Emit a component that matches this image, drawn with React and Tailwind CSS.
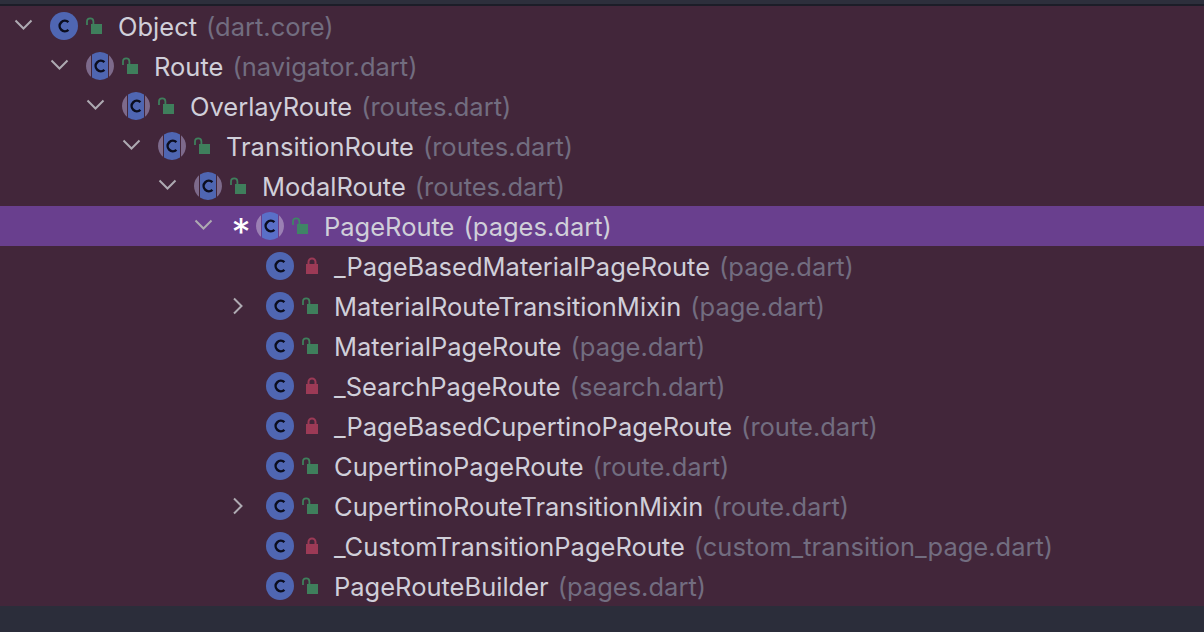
const rows = [
  { pad: "pl-[14px]", open: true, name: "Object", file: "(dart.core)" },
  { pad: "pl-[50px]", open: true, name: "Route", file: "(navigator.dart)", split: true },
  { pad: "pl-[86px]", open: true, name: "OverlayRoute", file: "(routes.dart)", split: true },
  { pad: "pl-[122px]", open: true, name: "TransitionRoute", file: "(routes.dart)", split: true },
  { pad: "pl-[158px]", open: true, name: "ModalRoute", file: "(routes.dart)", split: true },
  { pad: "pl-[194px]", open: true, name: "PageRoute", file: "(pages.dart)", split: true, selected: true },
  { pad: "pl-[230px]", name: "_PageBasedMaterialPageRoute", file: "(page.dart)", locked: true },
  { pad: "pl-[230px]", closed: true, name: "MaterialRouteTransitionMixin", file: "(page.dart)" },
  { pad: "pl-[230px]", name: "MaterialPageRoute", file: "(page.dart)" },
  { pad: "pl-[230px]", name: "_SearchPageRoute", file: "(search.dart)", locked: true },
  { pad: "pl-[230px]", name: "_PageBasedCupertinoPageRoute", file: "(route.dart)", locked: true },
  { pad: "pl-[230px]", name: "CupertinoPageRoute", file: "(route.dart)" },
  { pad: "pl-[230px]", closed: true, name: "CupertinoRouteTransitionMixin", file: "(route.dart)" },
  { pad: "pl-[230px]", name: "_CustomTransitionPageRoute", file: "(custom_transition_page.dart)", locked: true },
  { pad: "pl-[230px]", name: "PageRouteBuilder", file: "(pages.dart)" },
];

function Chevron({ kind }) {
  return (
    <svg width="20" height="20" viewBox="0 0 20 20" fill="none" className="shrink-0" stroke="#aeaab2" strokeWidth="2">
      {kind === "open" ? <path d="M1.5 4.5 L9.5 12.5 L17.5 4.5" /> : <path d="M4 2.5 L11.5 10 L4 17.5" />}
    </svg>
  );
}

function ClassIcon({ split, selected }) {
  const blue = selected ? "#5a6fc8" : "#4f66b2";
  const side = selected ? "#9b80b4" : "#7d6a8b";
  return (
    <svg width="28" height="28" viewBox="0 0 28 28" className="shrink-0">
      {split ? (
        <>
          <path d="M5 3.3 A14 14 0 0 0 5 24.7 Z" fill={side} />
          <path d="M23 3.3 A14 14 0 0 1 23 24.7 Z" fill={side} />
          <path d="M6 2.51 A14 14 0 0 1 22 2.51 L22 25.49 A14 14 0 0 1 6 25.49 Z" fill={blue} />
        </>
      ) : (
        <circle cx="14" cy="14" r="14" fill="#4f66b2" />
      )}
      <path d="M18.4 10.2 A5.2 5.2 0 1 0 18.4 17.8" fill="none" stroke="#0b0d1e" strokeWidth="2.5" />
    </svg>
  );
}

function LockIcon({ locked, selected }) {
  if (locked) {
    return (
      <svg width="16" height="18" viewBox="0 0 16 18" className="shrink-0">
        <path d="M6.5 9 V5 a3.5 3.5 0 0 1 7 0 V9" fill="none" stroke="#9c3a56" strokeWidth="2" />
        <rect x="4" y="7" width="12" height="10" fill="#9c3a56" />
      </svg>
    );
  }
  const c = selected ? "#3f8466" : "#3f7f5c";
  return (
    <svg width="16" height="18" viewBox="0 0 16 18" className="shrink-0">
      <path d="M1 8 V4.5 a3.2 3.2 0 0 1 6.4 0 V7" fill="none" stroke={c} strokeWidth="1.8" />
      <rect x="5" y="7" width="11" height="10" fill={c} />
    </svg>
  );
}

export default function App() {
  return (
    <div className="w-[1204px] h-[632px] overflow-hidden flex flex-col bg-[#2b2d3a] font-['Inter',sans-serif] text-[25.5px]">
      <div className="h-[4px] bg-[#2d2f3c] shrink-0" />
      <div className="h-[2px] bg-[#1c1d28] shrink-0" />
      <div className="h-[600px] shrink-0 bg-[#42263a] flex flex-col">
        {rows.map((r) => (
          <div
            key={r.name}
            className={`h-[40px] shrink-0 flex items-center ${r.pad} ${r.selected ? "bg-[#693f8e]" : ""}`}
          >
            <div className="w-[36px] shrink-0 flex items-center">
              {r.open && <Chevron kind="open" />}
              {r.closed && <Chevron kind="closed" />}
            </div>
            {r.selected && <span className="w-[26px] -ml-[2px] mr-[2px] shrink-0 text-center text-white text-[38px] leading-none pt-[12px]">*</span>}
            <ClassIcon split={r.split} selected={r.selected} />
            <div className="ml-[8px] mr-[16px] shrink-0 flex items-center">
              <LockIcon locked={r.locked} selected={r.selected} />
            </div>
            <span className="whitespace-nowrap text-[#d0cfd9] pt-[2px]">{r.name}</span>
            <span className={`whitespace-nowrap ml-[9px] pt-[2px] ${r.selected ? "text-[#d0cfd9]" : "text-[#726d80]"}`}>{r.file}</span>
          </div>
        ))}
      </div>
      <div className="flex-1 bg-[#2b2d3a]" />
    </div>
  );
}
